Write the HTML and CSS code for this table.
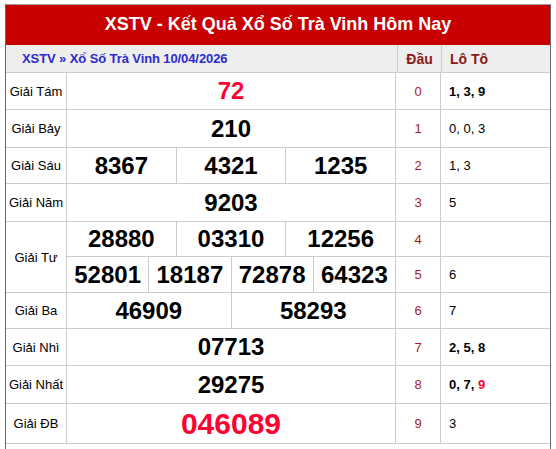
FILE: index.html
```html
<!DOCTYPE html>
<html lang="vi">
<head>
<meta charset="utf-8">
<title>XSTV - Kết Quả Xổ Số Trà Vinh Hôm Nay</title>
<link rel="stylesheet" href="styles.css">
</head>
<body>
<div class="box">
  <h1 class="title">XSTV - Kết Quả Xổ Số Trà Vinh Hôm Nay</h1>
  <div class="head">
    <div class="crumb"><span><a href="#">XSTV</a> » <a href="#">Xổ Số Trà Vinh 10/04/2026</a></span></div>
    <div class="hcell">Đầu</div>
    <div class="hcell lt">Lô Tô</div>
  </div>
  <div class="grid">
    <div class="lbl">Giải Tám</div>
    <div class="num"><span class="red n24">72</span></div>
    <div class="dau">0</div>
    <div class="loto b"><span>1, 3, 9</span></div>

    <div class="lbl">Giải Bảy</div>
    <div class="num"><span class="n24">210</span></div>
    <div class="dau">1</div>
    <div class="loto"><span>0, 0, 3</span></div>

    <div class="lbl">Giải Sáu</div>
    <div class="num split3"><span>8367</span><span>4321</span><span>1235</span></div>
    <div class="dau">2</div>
    <div class="loto"><span>1, 3</span></div>

    <div class="lbl">Giải Năm</div>
    <div class="num"><span class="n24">9203</span></div>
    <div class="dau">3</div>
    <div class="loto"><span>5</span></div>

    <div class="lbl span2">Giải Tư</div>
    <div class="num split3"><span>28880</span><span>03310</span><span>12256</span></div>
    <div class="dau">4</div>
    <div class="loto"></div>
    <div class="num split4"><span>52801</span><span>18187</span><span>72878</span><span>64323</span></div>
    <div class="dau">5</div>
    <div class="loto"><span>6</span></div>

    <div class="lbl">Giải Ba</div>
    <div class="num split2"><span>46909</span><span>58293</span></div>
    <div class="dau">6</div>
    <div class="loto"><span>7</span></div>

    <div class="lbl">Giải Nhì</div>
    <div class="num"><span class="n24">07713</span></div>
    <div class="dau">7</div>
    <div class="loto b"><span>2, 5, 8</span></div>

    <div class="lbl">Giải Nhất</div>
    <div class="num"><span class="n24">29275</span></div>
    <div class="dau">8</div>
    <div class="loto b"><span>0, 7, <b class="red">9</b></span></div>

    <div class="lbl">Giải ĐB</div>
    <div class="num"><span class="red n30">046089</span></div>
    <div class="dau">9</div>
    <div class="loto"><span>3</span></div>
  </div>
</div>
</body>
</html>
```
FILE: styles.css
```css
* { box-sizing: border-box; }
html, body { margin: 0; padding: 0; background: #fff; }
body {
  font-family: "Liberation Sans", Arial, sans-serif;
  color: #000;
  height: 449px;
  overflow: hidden;
}
.box {
  margin: 4px 5px 0 5px;
  width: 546px;
  border: 1px solid #666;
  border-top-color: #999;
  border-bottom: none;
  height: 460px;
}
.title {
  margin: 0;
  height: 40px;
  background: #c80000;
  color: #fff;
  font-size: 18px;
  font-weight: bold;
  text-align: center;
  line-height: 38px;
}
.head {
  display: grid;
  grid-template-columns: 391px 43px 108px;
  column-gap: 1px;
  background: #ccc;
  height: 27px;
}
.head > div {
  background: #eee;
  display: flex;
  align-items: center;
  font-size: 14px;
  font-weight: bold;
}
.crumb { padding-left: 16px; color: #2b2bcc; white-space: nowrap; font-size: 13px !important; letter-spacing: -0.1px; }
.crumb a { color: #2b2bcc; text-decoration: none; }
.hcell { justify-content: center; color: #8b1a1a; }
.hcell.lt { justify-content: flex-start; padding-left: 8px; }
.grid {
  display: grid;
  grid-template-columns: 60px 328px 44px 109px;
  grid-template-rows: 36px 37px 35px 37px 34px 35px 35px 36px 37px 39px;
  gap: 1px;
  background: #ccc;
  border-top: 1px solid #ccc;
  border-bottom: 1px solid #ccc;
  padding-right: 1px;
}
.grid > div {
  background: #fff;
  display: flex;
  align-items: center;
}
.lbl { justify-content: center; font-size: 13px; white-space: nowrap; }
.span2 { grid-row: span 2; }
.num { justify-content: center; font-weight: bold; }
.n24 { font-size: 24px; }
.n30 { font-size: 30px; }
.red { color: #ff0033; }
.grid > .split2, .grid > .split3, .grid > .split4 {
  display: grid;
  align-items: stretch;
  gap: 1px;
  background: #ccc;
}
.split2 { grid-template-columns: repeat(2, 1fr); }
.split3 { grid-template-columns: repeat(3, 1fr); }
.split4 { grid-template-columns: repeat(4, 1fr); }
.split2 > span, .split3 > span, .split4 > span {
  background: #fff;
  display: flex;
  align-items: center;
  justify-content: center;
  font-size: 24px;
}
.dau { justify-content: center; color: #a51c1c; font-size: 13px; }
.loto { padding-left: 8px; font-size: 13px; white-space: pre; }
.loto.b { font-weight: bold; }
```
